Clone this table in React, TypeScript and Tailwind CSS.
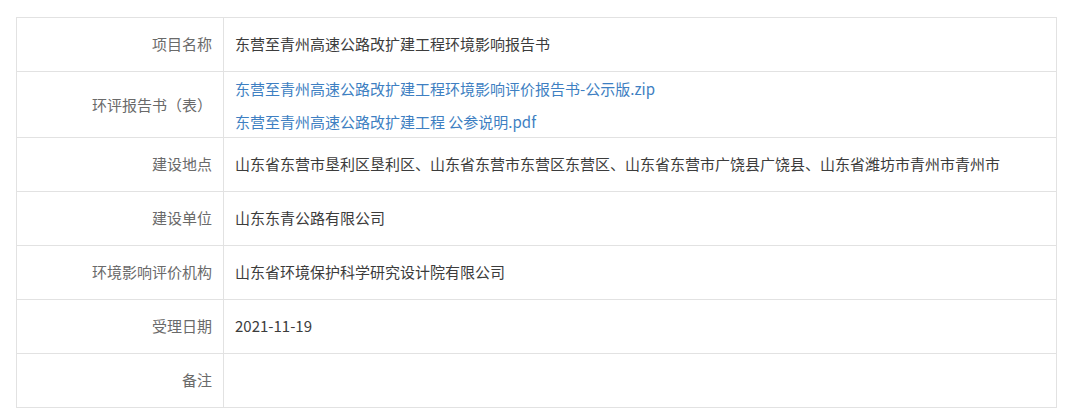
const rows: { label: string; value?: string; links?: string[]; tall?: boolean }[] = [
  { label: "项目名称", value: "东营至青州高速公路改扩建工程环境影响报告书" },
  {
    label: "环评报告书（表）",
    links: ["东营至青州高速公路改扩建工程环境影响评价报告书-公示版.zip", "东营至青州高速公路改扩建工程 公参说明.pdf"],
    tall: true,
  },
  { label: "建设地点", value: "山东省东营市垦利区垦利区、山东省东营市东营区东营区、山东省东营市广饶县广饶县、山东省潍坊市青州市青州市" },
  { label: "建设单位", value: "山东东青公路有限公司" },
  { label: "环境影响评价机构", value: "山东省环境保护科学研究设计院有限公司" },
  { label: "受理日期", value: "2021-11-19" },
  { label: "备注", value: "" },
];

export default function App() {
  return (
    <div className="w-[1080px] h-[418px] bg-white pt-[17px] pl-[16px] font-['Noto_Sans_CJK_SC',sans-serif] text-[15px]">
      <div className="w-[1041px] border-t border-l border-[#e2e2e2]">
        {rows.map((r) => (
          <div key={r.label} className={`grid grid-cols-[207px_1fr] border-b border-[#e2e2e2] ${r.tall ? "h-[66px]" : "h-[54px]"}`}>
            <div className="flex items-center justify-end pr-[11px] text-[#6a6a6a] border-r border-[#e2e2e2]">
              {r.label}
            </div>
            <div className="flex flex-col justify-center pl-[11px] border-r border-[#e2e2e2] text-[#3c3c3c]">
              {r.links ? (
                r.links.map((l) => (
                  <a key={l} href="#" className="leading-[33px] text-[#3e7fc2]">
                    {l}
                  </a>
                ))
              ) : (
                <span>{r.value}</span>
              )}
            </div>
          </div>
        ))}
      </div>
    </div>
  );
}
